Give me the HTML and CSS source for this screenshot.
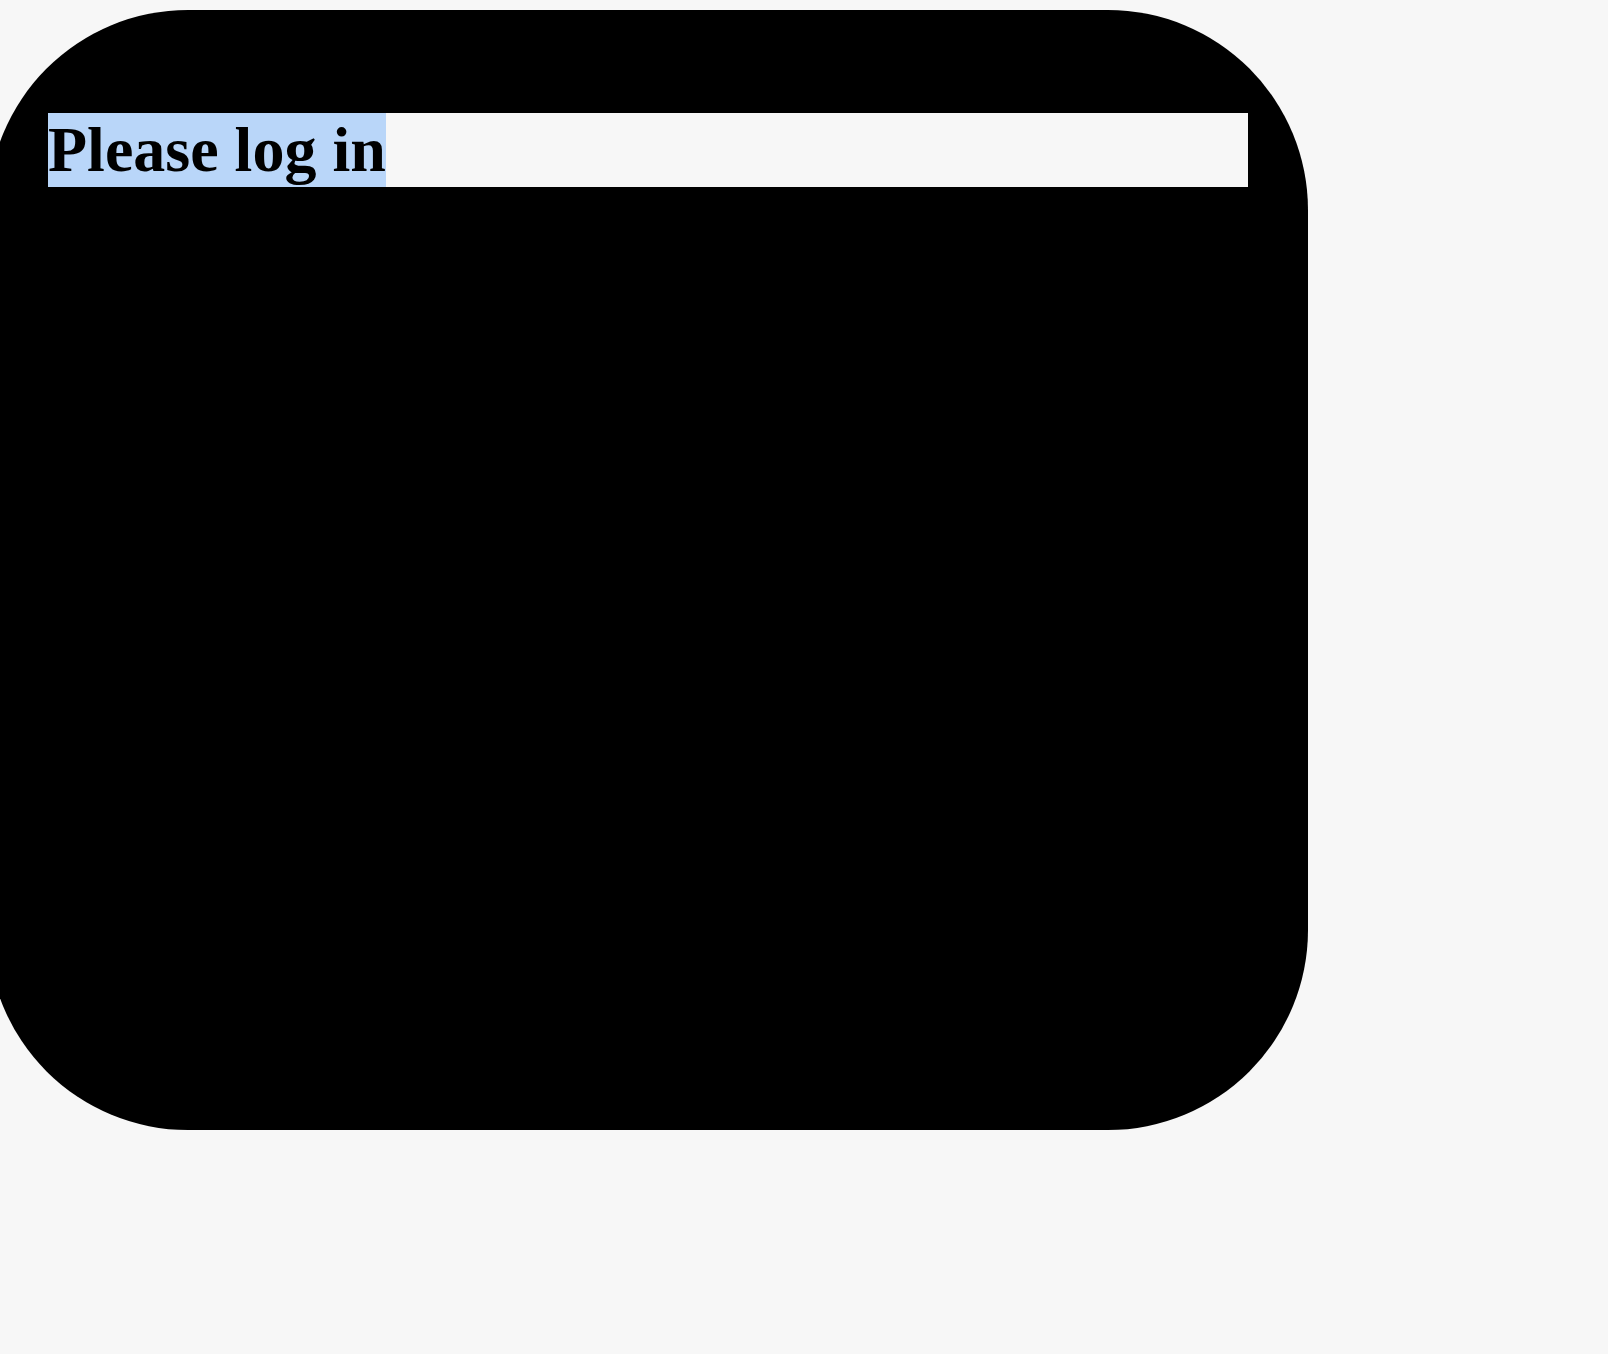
FILE: index.html
```html
<!DOCTYPE html>
<html lang="en">
<head>
<meta charset="utf-8">
<title>Please log in</title>
<link rel="stylesheet" href="styles.css">
</head>
<body>
<main class="card">
  <h1 class="title"><span class="selected">Please log in</span></h1>
</main>
</body>
</html>
```

FILE: styles.css
```css
html, body {
  margin: 0;
  padding: 0;
  background: #f7f7f7;
}

body {
  font-family: "Liberation Serif", "Times New Roman", serif;
}

.card {
  box-sizing: border-box;
  width: 1320px;
  height: 1120px;
  margin: 10px 0 0 -12px;
  padding: 103px 60px;
  background: #000;
  border-radius: 200px;
}

.title {
  margin: 0;
  height: 74px;
  background: #f7f7f7;
  color: #000;
  font-size: 64px;
  line-height: 74px;
  font-weight: bold;
}

.selected {
  display: inline-block;
  height: 74px;
  background: #b9d6f9;
}
```
